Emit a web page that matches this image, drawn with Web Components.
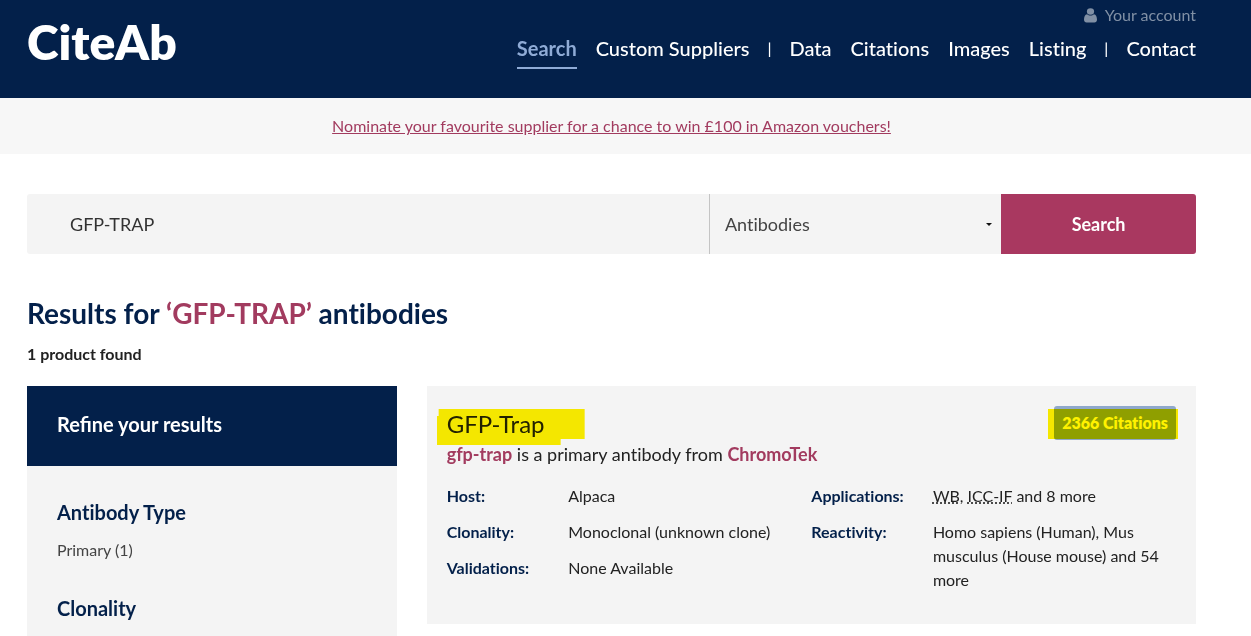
<!DOCTYPE html>
<html lang="en">
<head>
<meta charset="utf-8">
<meta name="viewport" content="width=device-width, initial-scale=1">
<title>CiteAb - GFP-TRAP antibodies</title>
<style>
  :root {
    --navy: #03204a;
    --berry: #a93860;
    --link: #a23b5f;
    --panel: #f4f4f4;
    --sky: #8fabd6;
    --gutter: 0 55px 0 27px;
  }
  body {
    margin: 0;
    background: #fff;
    color: #222;
    font: 400 16px/24px Lato, "Liberation Sans", sans-serif;
    font-variant-ligatures: none;
  }
</style>
</head>
<body>
<citeab-page></citeab-page>

<script>
const define = (name, markup, setup) => {
  const template = document.createElement('template');
  template.innerHTML = markup;
  customElements.define(name, class extends HTMLElement {
    constructor() {
      super();
      this.attachShadow({ mode: 'open' }).append(template.content.cloneNode(true));
    }
    connectedCallback() { if (setup) setup(this); }
  });
};

define('nav-item', `
  <style>
    :host { display: block; }
    a { display: block; box-sizing: border-box; height: 40px; padding-top: 8px; color: #fff; text-decoration: none; white-space: nowrap; }
    :host([current]) a { color: var(--sky); font-weight: 700; border-bottom: 2px solid var(--sky); }
  </style>
  <a href="#"><slot></slot></a>`);

define('site-header', `
  <style>
    :host { display: block; background: var(--navy); color: #fff; }
    header { display: flex; justify-content: space-between; height: 98px; padding: var(--gutter); }
    .logo { margin-top: 12px; color: #fff; font-size: 48px; line-height: 60px; font-weight: 800; text-decoration: none; }
    .right { display: flex; flex-direction: column; align-items: flex-end; gap: 2px; padding-top: 3px; }
    .account { display: flex; align-items: center; gap: 8px; color: #8190a5; font-size: 16px; line-height: 24px; text-decoration: none; }
    svg { display: block; }
    nav { display: flex; gap: 19px; font-size: 20px; line-height: 22px; font-weight: 500; }
    .bar { display: flex; justify-content: center; width: 2px; padding-top: 8px; font-size: 16px; }
  </style>
  <header>
    <a class="logo" href="#">CiteAb</a>
    <div class="right">
      <a class="account" href="#">
        <svg width="13" height="15" viewBox="0 0 12 15" preserveAspectRatio="none" fill="currentColor" aria-hidden="true"><circle cx="6" cy="3.5" r="3.3"/><path d="M2.8 6.2C.9 6.6 0 8.8 0 11.8 0 13.4 1 14.4 2.4 14.4h7.2c1.4 0 2.4-1 2.4-2.6 0-3-.9-5.2-2.8-5.6C8.300 7 7.200 7.500 6 7.500S3.700 7 2.800 6.200z"/></svg>
        Your account
      </a>
      <nav aria-label="Main">
        <nav-item current>Search</nav-item>
        <nav-item>Custom Suppliers</nav-item>
        <span class="bar">|</span>
        <nav-item>Data</nav-item>
        <nav-item>Citations</nav-item>
        <nav-item>Images</nav-item>
        <nav-item>Listing</nav-item>
        <span class="bar">|</span>
        <nav-item>Contact</nav-item>
      </nav>
    </div>
  </header>`);

define('promo-banner', `
  <style>
    :host { display: block; padding: var(--gutter); background: #f7f7f7; text-align: center; }
    p { margin: 0; padding: 16px 0; }
    a { color: var(--link); }
  </style>
  <p><a href="#"><slot></slot></a></p>`);

define('search-bar', `
  <style>
    :host { display: block; }
    form { display: grid; grid-template-columns: 7fr 3fr 2fr; height: 60px; border-radius: 3px; overflow: hidden; background: var(--panel); }
    input, select, button { box-sizing: border-box; width: 100%; height: 100%; min-width: 0; margin: 0; border: 0; border-radius: 0; font: inherit; font-variant-ligatures: none; font-size: 18px; }
    input { padding: 0 43px; background: transparent; color: #333; }
    .kind { position: relative; border-left: 1px solid #c4c4c4; }
    select { appearance: none; padding: 0 32px 0 15px; background: transparent; color: #444; }
    .kind::after { content: ""; position: absolute; right: 9px; top: 29px; border: 3px solid transparent; border-top-color: #111; border-bottom: 0; }
    button { background: var(--berry); color: #fff; font-weight: 700; cursor: pointer; }
  </style>
  <form onsubmit="return false">
    <input type="text" value="GFP-TRAP" aria-label="Search term">
    <div class="kind"><select aria-label="Product type"><option>Antibodies</option></select></div>
    <button type="submit">Search</button>
  </form>`);

define('filter-group', `
  <style>
    :host { display: block; }
    h3 { margin: 0 0 12px; color: var(--navy); font-size: 20px; line-height: 28px; font-weight: 700; }
    ::slotted(a) { color: #444; text-decoration: none; }
  </style>
  <h3></h3>
  <slot></slot>`,
  host => { host.shadowRoot.querySelector('h3').textContent = host.getAttribute('heading'); });

define('filter-panel', `
  <style>
    :host { display: block; background: var(--panel); }
    h2 { margin: 0; padding: 24px 30px 28px; background: var(--navy); color: #fff; font-size: 20px; line-height: 28px; font-weight: 700; font-variant-ligatures: normal; }
    .groups { display: grid; gap: 32px; padding: 32px 30px; }
  </style>
  <h2><slot name="title"></slot></h2>
  <div class="groups"><slot></slot></div>`);

define('citation-badge', `
  <style>
    :host { display: block; position: relative; }
    a { display: block; padding: 5px 8px; border-radius: 3px; background: #8fa8cb; color: #fff; font-weight: 800; text-decoration: none; white-space: nowrap; }
    i { position: absolute; inset: 3px -2px 1px -6px; background: #fff200; mix-blend-mode: multiply; pointer-events: none; }
  </style>
  <a href="#"><slot></slot></a><i></i>`);

define('product-card', `
  <style>
    :host { display: block; padding: 20px 20px 32px; background: var(--panel); }
    .top { display: flex; justify-content: space-between; align-items: flex-start; }
    h2 { position: relative; margin: 0; font-size: 24px; line-height: 36px; font-weight: 400; }
    h2 a { color: #222; text-decoration: none; }
    .marker { position: absolute; left: -10px; top: 3px; width: 148px; height: 36px; background: #fff200; mix-blend-mode: multiply; pointer-events: none;
      clip-path: polygon(2px 0, 100% 0, 100% 30px, 124px 30px, 124px 100%, 0 100%, 0 7px, 2px 7px); }
    p { margin: 0 0 18px; font-size: 18px; line-height: 24px; }
    p a { color: var(--link); font-weight: 700; text-decoration: none; }
    .facts { display: grid; grid-template-columns: 1fr 1fr; }
    dl { display: grid; grid-template-columns: 1fr 2fr; gap: 12px 0; align-content: start; margin: 0; }
    dt { color: var(--navy); font-weight: 700; }
    dd { margin: 0; }
    abbr { text-decoration: underline dotted; }
  </style>
  <div class="top">
    <h2><a href="#">GFP-Trap</a><span class="marker"></span></h2>
    <citation-badge>2366 Citations</citation-badge>
  </div>
  <p><a href="#">gfp-trap</a> is a primary antibody from <a href="#">ChromoTek</a></p>
  <div class="facts">
    <dl>
      <dt>Host:</dt><dd>Alpaca</dd>
      <dt>Clonality:</dt><dd>Monoclonal (unknown clone)</dd>
      <dt>Validations:</dt><dd>None Available</dd>
    </dl>
    <dl>
      <dt>Applications:</dt><dd><abbr title="Western blot">WB</abbr>, <abbr title="Immunocytochemistry">ICC-IF</abbr> and 8 more</dd>
      <dt>Reactivity:</dt><dd>Homo sapiens (Human), Mus musculus (House mouse) and 54 more</dd>
    </dl>
  </div>`);

define('citeab-page', `
  <style>
    :host { display: block; }
    main { padding: var(--gutter); }
    search-bar { margin-top: 40px; }
    h1 { margin: 39px 0 9px; color: var(--navy); font-size: 28px; line-height: 40px; font-weight: 700; }
    h1 em { color: var(--link); font-style: normal; }
    .count { margin: 0 0 20px; font-weight: 700; }
    .columns { display: grid; grid-template-columns: repeat(3, minmax(0, 1fr)); gap: 30px; align-items: start; }
    product-card { grid-column: span 2; }
  </style>
  <site-header></site-header>
  <promo-banner>Nominate your favourite supplier for a chance to win £100 in Amazon vouchers!</promo-banner>
  <main>
    <search-bar></search-bar>
    <h1>Results for <em>‘GFP-TRAP’</em> antibodies</h1>
    <p class="count">1 product found</p>
    <div class="columns">
      <filter-panel>
        <span slot="title">Refine your results</span>
        <filter-group heading="Antibody Type"><a href="#">Primary (1)</a></filter-group>
        <filter-group heading="Clonality"></filter-group>
      </filter-panel>
      <product-card></product-card>
    </div>
  </main>`);
</script>
</body>
</html>
